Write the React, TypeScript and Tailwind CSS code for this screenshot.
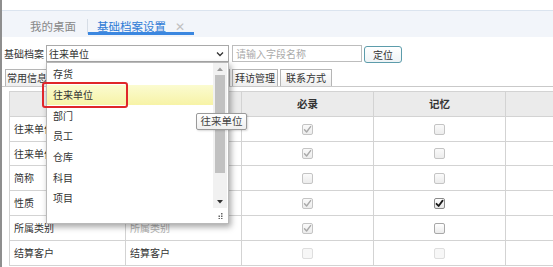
import React from "react";

type Cb = "dc" | "du" | "ec" | "eu" | "lu";

function Check({ t }: { t: Cb }) {
  const boxCls =
    t === "ec"
      ? "border-[#8a8a8a] bg-gradient-to-b from-white to-[#e6e6e6]"
      : t === "eu"
      ? "border-[#a8a8a8] bg-gradient-to-b from-white to-[#ebebeb]"
      : t === "lu"
      ? "border-[#dedede] bg-[#f7f7f7]"
      : "border-[#c4c4c4] bg-gradient-to-b from-[#fafafa] to-[#ececec]";
  const checked = t === "dc" || t === "ec";
  return (
    <div className={`w-[11px] h-[11px] rounded-[2px] border flex items-center justify-center ${boxCls}`}>
      {checked && (
        <svg width="9" height="9" viewBox="0 0 9 9">
          <path
            d="M1.5 4.8 L3.6 7 L7.6 1.6"
            fill="none"
            stroke={t === "ec" ? "#1a1a1a" : "#a9a9a9"}
            strokeWidth={t === "ec" ? 1.8 : 1.4}
            strokeLinecap="round"
            strokeLinejoin="round"
          />
        </svg>
      )}
    </div>
  );
}

const rows: { c1: string; c2: string; grey?: boolean; req: Cb; mem: Cb; h: string }[] = [
  { c1: "往来单位编码", c2: "往来单位编码", req: "dc", mem: "du", h: "h-[25px]" },
  { c1: "往来单位名称", c2: "往来单位名称", req: "dc", mem: "du", h: "h-[24px]" },
  { c1: "简称", c2: "简称", req: "du", mem: "du", h: "h-[25px]" },
  { c1: "性质", c2: "性质", req: "dc", mem: "ec", h: "h-[25px]" },
  { c1: "所属类别", c2: "所属类别", grey: true, req: "dc", mem: "eu", h: "h-[25px]" },
  { c1: "结算客户", c2: "结算客户", req: "lu", mem: "lu", h: "h-[25px]" },
];

const items = ["存货", "往来单位", "部门", "员工", "仓库", "科目", "项目"];

export default function App() {
  return (
    <div className="w-[553px] h-[267px] relative overflow-hidden bg-white border-l-2 border-[#8e8e8e] font-['Noto_Sans_CJK_SC','Microsoft_YaHei',sans-serif] text-[#333] leading-none">
      {/* top spacer */}
      <div className="h-[10px]" />
      {/* tab bar */}
      <div className="h-[27px] bg-[#f2f5fa] border-t border-[#dbe4ef] flex items-start">
        <div className="w-[86px] h-[24px] pl-[28px] pt-[10px] text-[11.5px] text-[#888] relative">
          我的桌面
          <div className="absolute right-0 top-[8px] w-px h-[15px] bg-[#d6dde6]" />
        </div>
        <div className="w-[106px] h-[24px] border-b-[3px] border-[#3b87e0] pl-[9px] pt-[10px] flex items-start text-[11.5px] text-[#2f7bd6]">
          <span>基础档案设置</span>
          <span className="ml-[9px] text-[#c0c0c0] text-[12px] -mt-[1px]">✕</span>
        </div>
      </div>
      {/* search row */}
      <div className="h-[31px] pt-[8px] flex items-start text-[10px]">
        <div className="w-[44px] pl-[2px] h-[17px] flex items-center text-[#333]">基础档案</div>
        <div className="w-[183px] h-[17px] border border-[#a9a9a9] bg-white flex items-center pl-[2px] pr-[4px]">
          <span className="flex-1">往来单位</span>
          <svg width="8" height="6" viewBox="0 0 8 6">
            <path d="M1 1.5 L4 4.5 L7 1.5" fill="none" stroke="#333" strokeWidth="1.3" />
          </svg>
        </div>
        <div className="ml-[3px] w-[130px] h-[17px] border border-[#bdbdbd] bg-white flex items-center pl-[3px] text-[#aaa]">
          请输入字段名称
        </div>
        <div className="ml-[2px] mt-[1px] w-[38px] h-[17px] border border-[#5c9cab] rounded-[3px] bg-gradient-to-b from-white to-[#eef3f5] flex items-center justify-center">
          定位
        </div>
      </div>
      {/* sub tabs */}
      <div className="h-[18px] flex items-end pl-[3px] gap-[2px] text-[10px]">
        {["常用信息", "信用信息", "财务信息", "业务信息", "附加信息"].map((t, i) => (
          <div
            key={t}
            className={`${i === 4 ? "w-[41px]" : "w-[44px]"} h-[17px] border border-b-0 border-[#b5b5b5] bg-gradient-to-b from-white to-[#eeeeee] flex items-center justify-center`}
          >
            {t}
          </div>
        ))}
        <div className="w-[46px] h-[17px] border border-b-0 border-[#b5b5b5] bg-gradient-to-b from-white to-[#eeeeee] flex items-center justify-center">
          拜访管理
        </div>
        <div className="w-[52px] h-[17px] border border-b-0 border-[#b5b5b5] bg-gradient-to-b from-white to-[#eeeeee] flex items-center justify-center">
          联系方式
        </div>
      </div>
      {/* panel */}
      <div className="border-t border-[#c9c9c9] pt-[4px] pl-[7px]">
        <div className="border-t border-l border-[#d3d3d3] w-max text-[10px]">
          <div className="flex h-[25px] bg-[#ebebeb] font-bold text-[10.5px] text-[#333]">
            {["字段名称", "显示名称", "必录", "记忆", ""].map((h, i) => (
              <div
                key={i}
                className={`${i < 2 ? "w-[116px]" : "w-[132px]"} border-r border-b border-[#d3d3d3] flex items-center justify-center`}
              >
                {h}
              </div>
            ))}
          </div>
          {rows.map((r, i) => (
            <div key={i} className={`flex ${r.h}`}>
              <div className="w-[116px] border-r border-b border-[#d3d3d3] flex items-center pl-[4px]">{r.c1}</div>
              <div className={`w-[116px] border-r border-b border-[#d3d3d3] flex items-center pl-[4px] ${r.grey ? "text-[#b0b0b0]" : ""}`}>
                {r.c2}
              </div>
              <div className="w-[132px] border-r border-b border-[#d3d3d3] flex items-center justify-center">
                <Check t={r.req} />
              </div>
              <div className="w-[132px] border-r border-b border-[#d3d3d3] flex items-center justify-center">
                <Check t={r.mem} />
              </div>
              <div className="w-[132px] border-r border-b border-[#d3d3d3]" />
            </div>
          ))}
        </div>
      </div>

      {/* dropdown */}
      <div className="absolute left-[44px] top-[62px] w-[183px] h-[162px] bg-white border border-[#b9b9b9] shadow-[2px_3px_6px_rgba(0,0,0,0.35)] flex text-[10px]">
        <div className="flex-1 pt-[1px]">
          {items.map((it, i) => (
            <div
              key={it}
              className={`h-[20.7px] pl-[6px] flex items-center ${i === 1 ? "bg-gradient-to-b from-[#fbfbd0] to-[#f7f3a6]" : ""}`}
            >
              {it}
            </div>
          ))}
        </div>
        <div className="w-[14px] mr-[1px] flex flex-col items-center bg-[#f1f1f1]">
          <div className="h-[12px] flex items-center justify-center">
            <svg width="6" height="4" viewBox="0 0 6 4">
              <path d="M0 4 L3 0.5 L6 4 Z" fill="#9a9a9a" />
            </svg>
          </div>
          <div className="w-[10px] h-[98px] bg-[#c1c1c1]" />
          <div className="flex-1" />
          <div className="h-[12px] flex items-center justify-center">
            <svg width="6" height="4" viewBox="0 0 6 4">
              <path d="M0 0 L3 3.5 L6 0 Z" fill="#333" />
            </svg>
          </div>
          <div className="h-[15px] w-full bg-white flex items-center justify-center">
            <svg width="6" height="6" viewBox="0 0 6 6">
              <rect x="4" y="0" width="1.5" height="1.5" fill="#666" />
              <rect x="1.5" y="2.5" width="1.5" height="1.5" fill="#666" />
              <rect x="4" y="2.5" width="1.5" height="1.5" fill="#666" />
              <rect x="1.5" y="5" width="1.5" height="1" fill="#666" />
              <rect x="4" y="5" width="1.5" height="1" fill="#666" />
            </svg>
          </div>
        </div>
      </div>

      {/* red highlight box */}
      <div className="absolute left-[40px] top-[82px] w-[86px] h-[26px] border-2 border-[#e0262a] rounded-[3px]" />

      {/* tooltip */}
      <div className="absolute left-[194px] top-[113px] w-[51px] h-[17px] border border-[#9a9a9a] rounded-[2px] bg-gradient-to-b from-white to-[#efefef] shadow-[1px_1px_2px_rgba(0,0,0,0.15)] flex items-center justify-center text-[10.5px] text-[#444]">
        往来单位
      </div>
    </div>
  );
}
